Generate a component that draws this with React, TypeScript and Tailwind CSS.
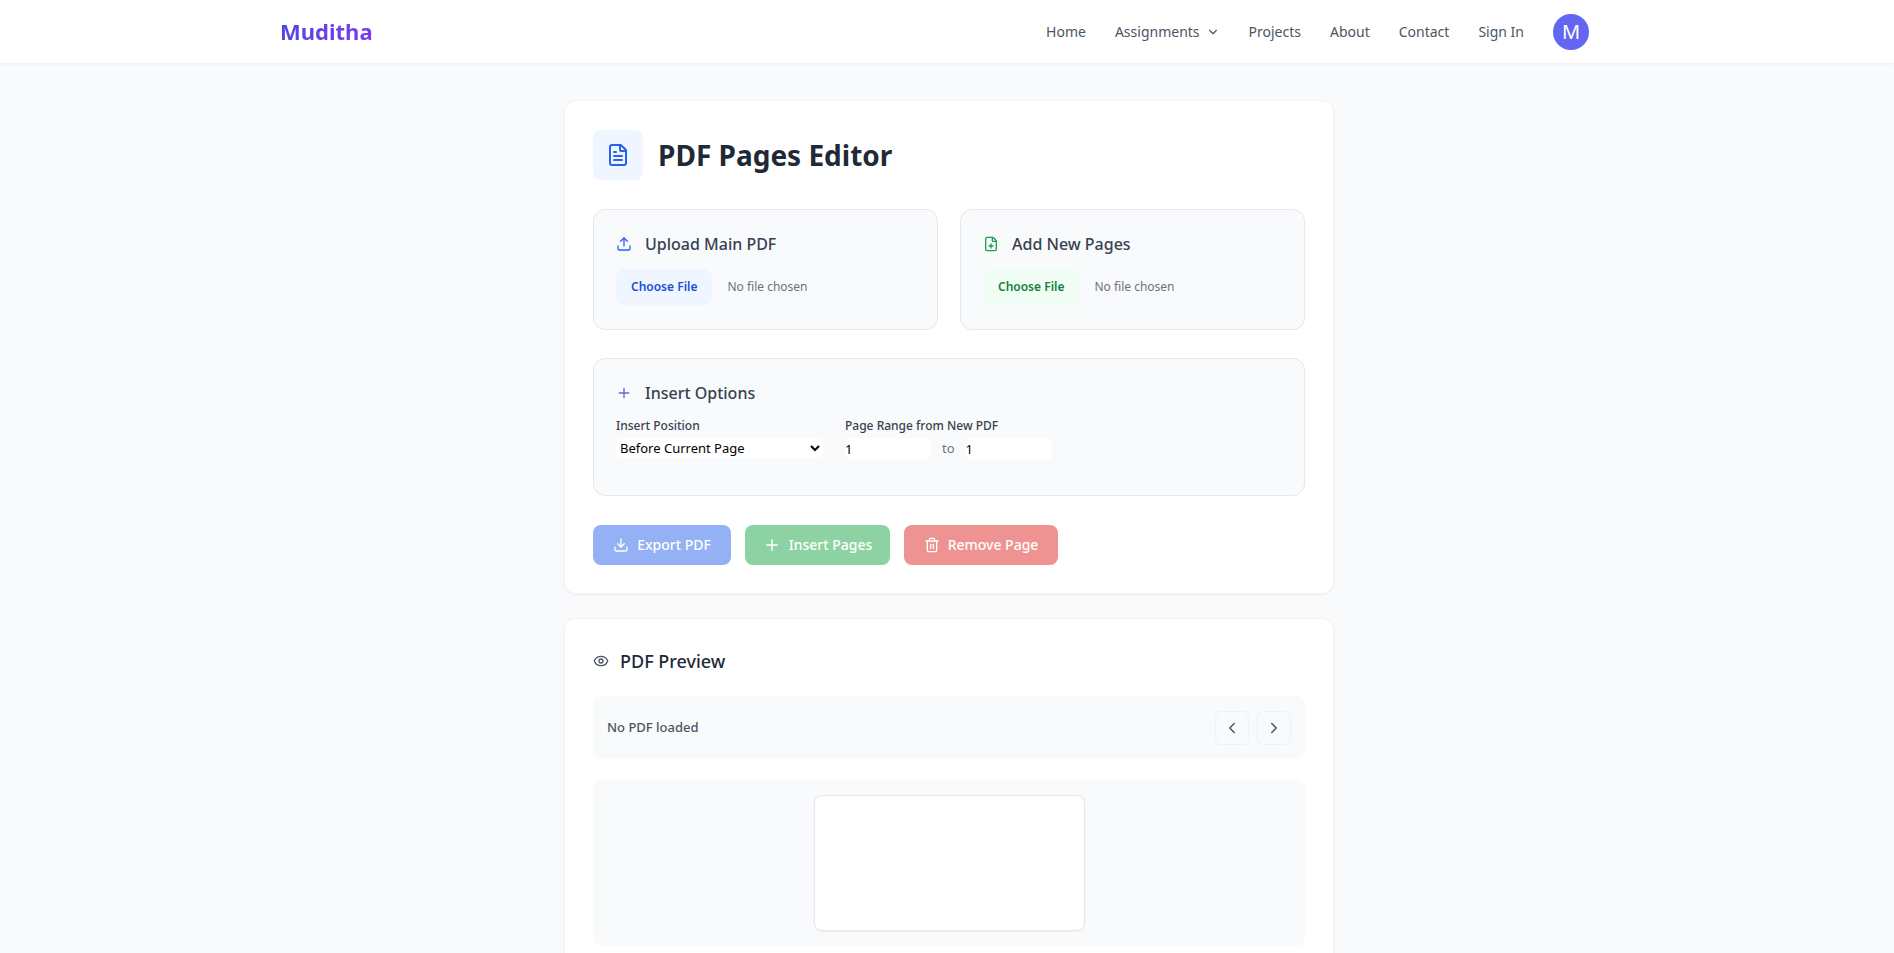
import { ChevronDown, ChevronLeft, ChevronRight, Download, Eye, FilePlus, FileText, Plus, Trash2, Upload } from "lucide-react";

const navLinks = ["Home", "Assignments", "Projects", "About", "Contact", "Sign In"];

function Navbar() {
  return (
    <nav className="h-16 bg-white border-b border-[#f0f1f3] shadow-[0_1px_2px_rgba(0,0,0,0.03)] flex items-center justify-between pl-[280px] pr-[305px]">
      <span className="text-[22px] font-bold bg-gradient-to-r from-[#4f46e5] to-[#7c3aed] bg-clip-text text-transparent">Muditha</span>
      <div className="flex items-center gap-[29px]">
        {navLinks.map((link) => (
          <a key={link} href="#" className="flex items-center gap-1.5 text-sm text-[#4b5563]">
            {link}
            {link === "Assignments" && <ChevronDown size={14} />}
          </a>
        ))}
        <div className="w-9 h-9 rounded-full bg-[#6366f1] text-white text-xl flex items-center justify-center">M</div>
      </div>
    </nav>
  );
}

function FileBox({ title, icon, buttonClass }: { title: string; icon: React.ReactNode; buttonClass: string }) {
  return (
    <div className="flex-1 h-[121px] rounded-xl border border-[#e5e7eb] bg-[#f9fafb] px-[22px] pt-[22px]">
      <div className="flex items-center gap-[13px] text-base font-medium text-[#374151]">
        {icon}
        {title}
      </div>
      <div className="mt-[13px] flex items-center gap-[15px]">
        <button className={`h-9 px-[15px] rounded-lg text-xs font-semibold ${buttonClass}`}>Choose File</button>
        <span className="text-xs text-[#6b7280]">No file chosen</span>
      </div>
    </div>
  );
}

function ActionButton({ label, icon, className }: { label: string; icon: React.ReactNode; className: string }) {
  return (
    <button className={`h-10 rounded-lg flex items-center justify-center gap-2 text-sm font-medium text-white ${className}`}>
      {icon}
      {label}
    </button>
  );
}

export default function App() {
  return (
    <div className="h-[953px] overflow-hidden bg-[#f9fafb] font-['Noto_Sans',sans-serif]">
      <Navbar />
      <main className="w-[770px] ml-[564px] pt-9 flex flex-col gap-6">
        <section className="rounded-xl bg-white border border-[#f3f4f6] shadow-[0_1px_3px_rgba(0,0,0,0.05)] px-7 pt-[29px] pb-7">
          <div className="flex items-center gap-[15px]">
            <div className="w-[50px] h-[50px] rounded-lg bg-[#eff6ff] flex items-center justify-center">
              <FileText size={24} className="text-[#2563eb]" />
            </div>
            <h1 className="text-[28px] font-bold text-[#1f2937]">PDF Pages Editor</h1>
          </div>
          <div className="mt-[29px] flex gap-[22px]">
            <FileBox title="Upload Main PDF" icon={<Upload size={16} className="text-[#2563eb]" />} buttonClass="bg-[#eff6ff] text-[#1d4ed8]" />
            <FileBox title="Add New Pages" icon={<FilePlus size={16} className="text-[#16a34a]" />} buttonClass="bg-[#f0fdf4] text-[#15803d]" />
          </div>
          <div className="mt-7 h-[138px] rounded-xl border border-[#e5e7eb] bg-[#f9fafb] px-[22px] pt-[22px]">
            <div className="flex items-center gap-[13px] text-base font-medium text-[#374151]">
              <Plus size={16} className="text-[#6366f1]" />
              Insert Options
            </div>
            <div className="mt-[13px] flex gap-[22px]">
              <div className="w-[207px]">
                <p className="text-xs font-medium text-[#374151]">Insert Position</p>
                <select className="mt-1 w-full h-5 rounded-md bg-white text-[13px] text-black">
                  <option>Before Current Page</option>
                </select>
              </div>
              <div>
                <p className="text-xs font-medium text-[#374151]">Page Range from New PDF</p>
                <div className="mt-1 flex items-center gap-[11px]">
                  <input defaultValue="1" className="w-[86px] h-[22px] rounded-md bg-white text-[13px] text-black" />
                  <span className="text-[13px] text-[#6b7280]">to</span>
                  <input defaultValue="1" className="w-[86px] h-[22px] rounded-md bg-white text-[13px] text-black" />
                </div>
              </div>
            </div>
          </div>
          <div className="mt-[29px] flex gap-[14px]">
            <ActionButton label="Export PDF" icon={<Download size={16} />} className="w-[138px] bg-[#93b1f4]" />
            <ActionButton label="Insert Pages" icon={<Plus size={18} />} className="w-[145px] bg-[#8dd2a3]" />
            <ActionButton label="Remove Page" icon={<Trash2 size={16} />} className="w-[154px] bg-[#ee9292]" />
          </div>
        </section>
        <section className="h-[500px] rounded-xl bg-white border border-[#f3f4f6] shadow-[0_1px_3px_rgba(0,0,0,0.05)] px-7 pt-7">
          <div className="flex items-center gap-[11px] text-lg font-medium text-[#1f2937]">
            <Eye size={16} className="text-[#4b5563]" />
            PDF Preview
          </div>
          <div className="mt-[21px] h-[63px] rounded-lg bg-[#f9fafb] flex items-center justify-between px-3.5">
            <span className="text-[13px] font-medium text-[#4b5563]">No PDF loaded</span>
            <div className="flex gap-2">
              <button className="w-[34px] h-[34px] rounded-md border border-[#f0f1f3] bg-[#f9fafb] flex items-center justify-center text-[#4b5563]"><ChevronLeft size={18} /></button>
              <button className="w-[34px] h-[34px] rounded-md border border-[#f0f1f3] bg-[#f9fafb] flex items-center justify-center text-[#4b5563]"><ChevronRight size={18} /></button>
            </div>
          </div>
          <div className="mt-[21px] h-[166px] rounded-lg bg-[#f9fafb] flex items-center justify-center">
            <div className="w-[271px] h-[136px] rounded-lg bg-white border border-[#e5e7eb] shadow-[0_1px_2px_rgba(0,0,0,0.05)]" />
          </div>
        </section>
      </main>
    </div>
  );
}
